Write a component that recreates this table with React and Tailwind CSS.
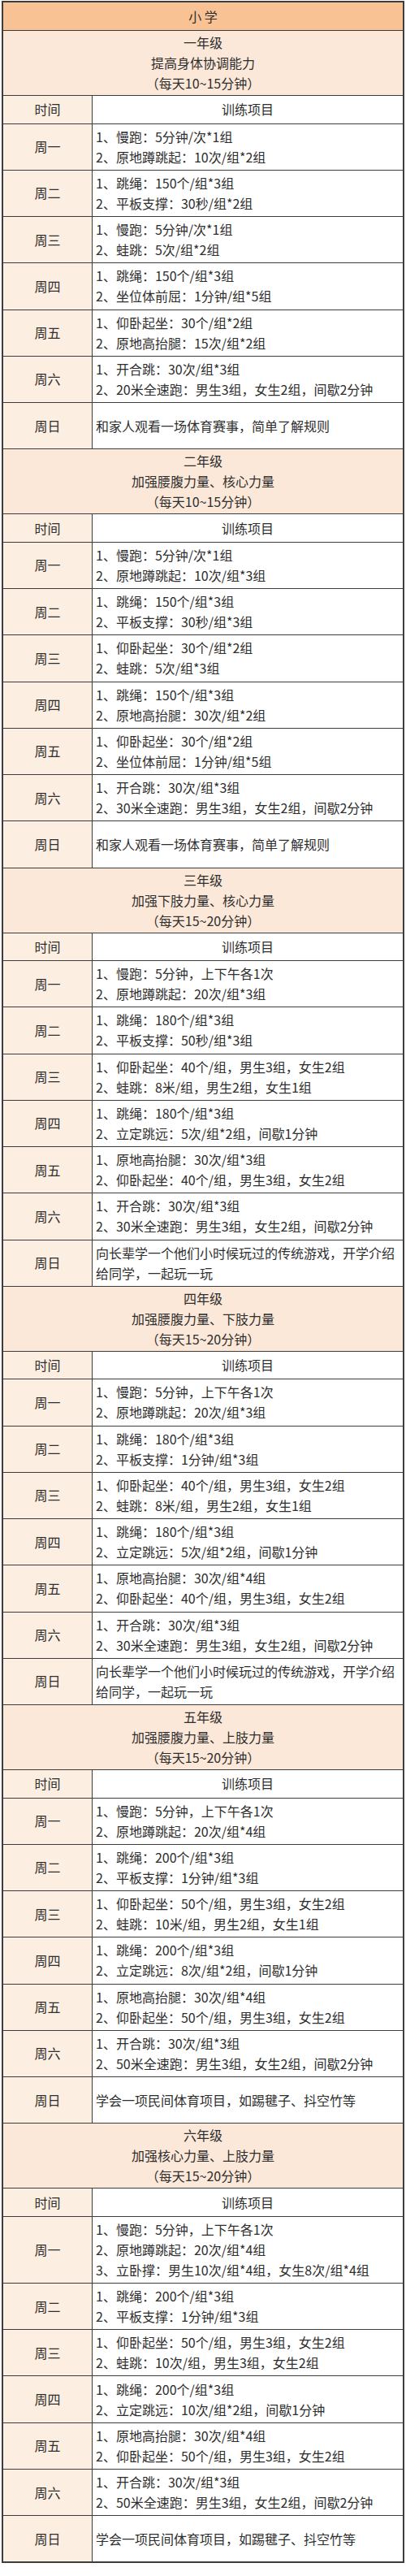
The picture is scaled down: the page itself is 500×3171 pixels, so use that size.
const grades = [
  {
    name: "一年级",
    goal: "提高身体协调能力",
    time: "（每天10~15分钟）",
    days: [
      ["1、慢跑：5分钟/次*1组", "2、原地蹲跳起：10次/组*2组"],
      ["1、跳绳：150个/组*3组", "2、平板支撑：30秒/组*2组"],
      ["1、慢跑：5分钟/次*1组", "2、蛙跳：5次/组*2组"],
      ["1、跳绳：150个/组*3组", "2、坐位体前屈：1分钟/组*5组"],
      ["1、仰卧起坐：30个/组*2组", "2、原地高抬腿：15次/组*2组"],
      ["1、开合跳：30次/组*3组", "2、20米全速跑：男生3组，女生2组，间歇2分钟"],
      ["和家人观看一场体育赛事，简单了解规则"],
    ],
  },
  {
    name: "二年级",
    goal: "加强腰腹力量、核心力量",
    time: "（每天10~15分钟）",
    days: [
      ["1、慢跑：5分钟/次*1组", "2、原地蹲跳起：10次/组*3组"],
      ["1、跳绳：150个/组*3组", "2、平板支撑：30秒/组*3组"],
      ["1、仰卧起坐：30个/组*2组", "2、蛙跳：5次/组*3组"],
      ["1、跳绳：150个/组*3组", "2、原地高抬腿：30次/组*2组"],
      ["1、仰卧起坐：30个/组*2组", "2、坐位体前屈：1分钟/组*5组"],
      ["1、开合跳：30次/组*3组", "2、30米全速跑：男生3组，女生2组，间歇2分钟"],
      ["和家人观看一场体育赛事，简单了解规则"],
    ],
  },
  {
    name: "三年级",
    goal: "加强下肢力量、核心力量",
    time: "（每天15~20分钟）",
    days: [
      ["1、慢跑：5分钟，上下午各1次", "2、原地蹲跳起：20次/组*3组"],
      ["1、跳绳：180个/组*3组", "2、平板支撑：50秒/组*3组"],
      ["1、仰卧起坐：40个/组，男生3组，女生2组", "2、蛙跳：8米/组，男生2组，女生1组"],
      ["1、跳绳：180个/组*3组", "2、立定跳远：5次/组*2组，间歇1分钟"],
      ["1、原地高抬腿：30次/组*3组", "2、仰卧起坐：40个/组，男生3组，女生2组"],
      ["1、开合跳：30次/组*3组", "2、30米全速跑：男生3组，女生2组，间歇2分钟"],
      ["向长辈学一个他们小时候玩过的传统游戏，开学介绍", "给同学，一起玩一玩"],
    ],
  },
  {
    name: "四年级",
    goal: "加强腰腹力量、下肢力量",
    time: "（每天15~20分钟）",
    days: [
      ["1、慢跑：5分钟，上下午各1次", "2、原地蹲跳起：20次/组*3组"],
      ["1、跳绳：180个/组*3组", "2、平板支撑：1分钟/组*3组"],
      ["1、仰卧起坐：40个/组，男生3组，女生2组", "2、蛙跳：8米/组，男生2组，女生1组"],
      ["1、跳绳：180个/组*3组", "2、立定跳远：5次/组*2组，间歇1分钟"],
      ["1、原地高抬腿：30次/组*4组", "2、仰卧起坐：40个/组，男生3组，女生2组"],
      ["1、开合跳：30次/组*3组", "2、30米全速跑：男生3组，女生2组，间歇2分钟"],
      ["向长辈学一个他们小时候玩过的传统游戏，开学介绍", "给同学，一起玩一玩"],
    ],
  },
  {
    name: "五年级",
    goal: "加强腰腹力量、上肢力量",
    time: "（每天15~20分钟）",
    days: [
      ["1、慢跑：5分钟，上下午各1次", "2、原地蹲跳起：20次/组*4组"],
      ["1、跳绳：200个/组*3组", "2、平板支撑：1分钟/组*3组"],
      ["1、仰卧起坐：50个/组，男生3组，女生2组", "2、蛙跳：10米/组，男生2组，女生1组"],
      ["1、跳绳：200个/组*3组", "2、立定跳远：8次/组*2组，间歇1分钟"],
      ["1、原地高抬腿：30次/组*4组", "2、仰卧起坐：50个/组，男生3组，女生2组"],
      ["1、开合跳：30次/组*3组", "2、50米全速跑：男生3组，女生2组，间歇2分钟"],
      ["学会一项民间体育项目，如踢毽子、抖空竹等"],
    ],
  },
  {
    name: "六年级",
    goal: "加强核心力量、上肢力量",
    time: "（每天15~20分钟）",
    days: [
      [
        "1、慢跑：5分钟，上下午各1次",
        "2、原地蹲跳起：20次/组*4组",
        "3、立卧撑：男生10次/组*4组，女生8次/组*4组",
      ],
      ["1、跳绳：200个/组*3组", "2、平板支撑：1分钟/组*3组"],
      ["1、仰卧起坐：50个/组，男生3组，女生2组", "2、蛙跳：10次/组，男生3组，女生2组"],
      ["1、跳绳：200个/组*3组", "2、立定跳远：10次/组*2组，间歇1分钟"],
      ["1、原地高抬腿：30次/组*4组", "2、仰卧起坐：50个/组，男生3组，女生2组"],
      ["1、开合跳：30次/组*3组", "2、50米全速跑：男生3组，女生2组，间歇2分钟"],
      ["学会一项民间体育项目，如踢毽子、抖空竹等"],
    ],
  },
]

const weekdays = ["周一", "周二", "周三", "周四", "周五", "周六", "周日"]

function GradeBlock({ grade }) {
  return (
    <div>
      {/* grade title */}
      <div className="bg-[#fce8d8] border-b border-[#3d3d3d] py-[2px] text-center leading-[25px]">
        <p>{grade.name}</p>
        <p>{grade.goal}</p>
        <p>{grade.time}</p>
      </div>

      {/* column header */}
      <div className="grid grid-cols-[110px_1fr] border-b border-[#3d3d3d] leading-[25px]">
        <div className="bg-[#fdeee2] border-r border-[#3d3d3d] py-[4.25px] text-center">时间</div>
        <div className="bg-white py-[4.25px] text-center">训练项目</div>
      </div>

      {/* days */}
      {grade.days.map((lines, i) => (
        <div
          key={i}
          className="grid grid-cols-[110px_1fr] border-b border-[#3d3d3d] leading-[25px] min-h-[57.25px]"
        >
          <div className="bg-[#fdeee2] border-r border-[#3d3d3d] flex items-center justify-center">
            {weekdays[i]}
          </div>
          <div className="bg-white flex flex-col justify-center pl-[4px] py-[3.1px]">
            {lines.map((line, j) => (
              <p key={j} className="whitespace-nowrap">{line}</p>
            ))}
          </div>
        </div>
      ))}
    </div>
  )
}

export default function App() {
  return (
    <div
      className="w-[500px] bg-white pt-[1px] px-[2px] pb-[11px] text-[16px] text-[#2e2e2e]"
      style={{ fontFamily: '"Noto Sans CJK SC", "Noto Sans", sans-serif' }}
    >
      <div className="border-2 border-b border-[#3d3d3d]">
        {/* header */}
        <div className="bg-[#f8c295] border-b border-[#3d3d3d] py-[4.5px] text-center leading-[25px]">
          小 学
        </div>

        {grades.map((g) => (
          <GradeBlock key={g.name} grade={g} />
        ))}
      </div>
    </div>
  )
}
